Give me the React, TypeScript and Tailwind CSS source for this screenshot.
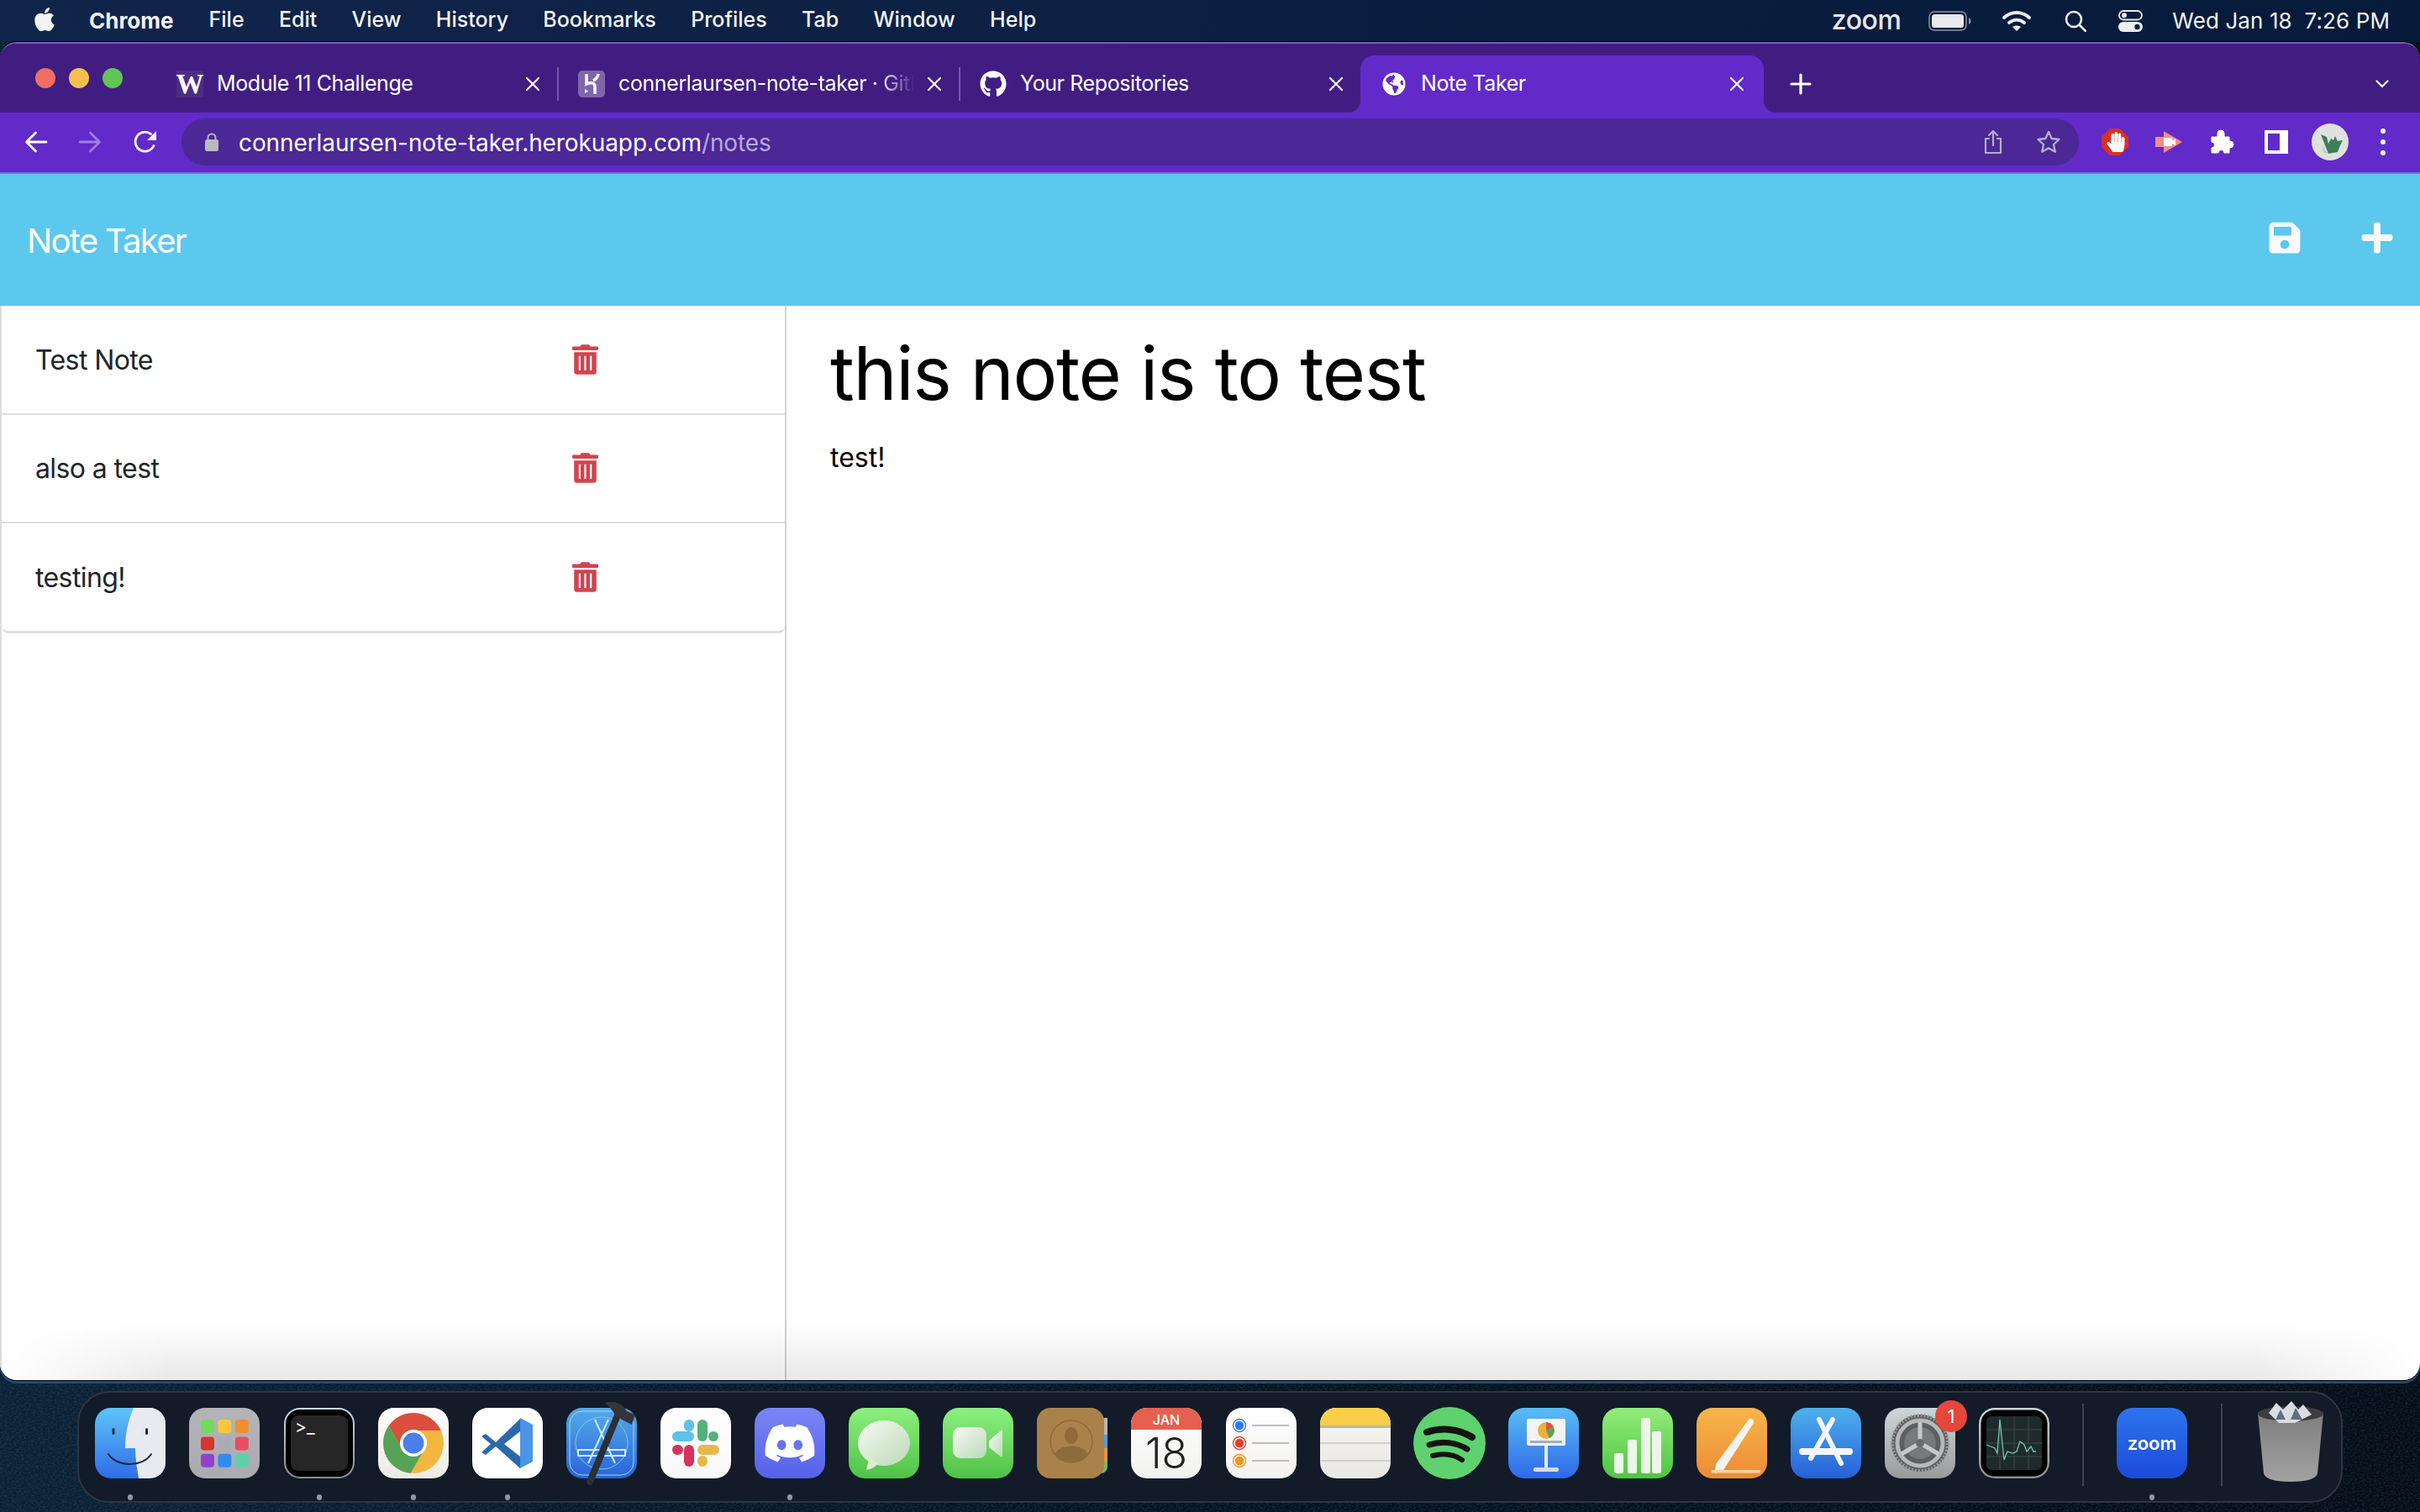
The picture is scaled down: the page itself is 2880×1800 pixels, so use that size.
import type { ReactNode } from "react";
import { FaApple, FaDiscord, FaGithub, FaGlobeAmericas, FaHandPaper, FaPlus, FaSave, FaTrashAlt } from "react-icons/fa";

const MENU = ["File", "Edit", "View", "History", "Bookmarks", "Profiles", "Tab", "Window", "Help"];
const NOTES = ["Test Note", "also a test", "testing!"];

function CloseX() {
  return (
    <svg viewBox="0 0 16 16" className="h-[16px] w-[16px] shrink-0 stroke-white" fill="none" strokeWidth="2.2" strokeLinecap="round">
      <path d="M1 1l14 14M15 1L1 15" />
    </svg>
  );
}

function Tab({ icon, title, fade }: { icon: ReactNode; title: string; fade?: boolean }) {
  return (
    <div className="flex h-[68px] w-[476px] shrink-0 items-center pl-[23px] pr-[21px]">
      <div className="flex h-[32px] w-[32px] shrink-0 items-center justify-center">{icon}</div>
      <div
        className={
          fade
            ? "ml-[16px] w-[352px] overflow-hidden whitespace-nowrap text-[25px] tracking-[-0.4px] text-white [mask-image:linear-gradient(to_right,black_88%,transparent)]"
            : "ml-[16px] w-[352px] overflow-hidden whitespace-nowrap text-[25px] tracking-[-0.4px] text-white"
        }
      >
        {title}
      </div>
      <div className="flex-1" />
      <CloseX />
    </div>
  );
}

function TabSep() {
  return <div className="mb-[14px] h-[40px] w-[2px] shrink-0 self-end bg-[#7559a8]" />;
}

function MenuBar() {
  return (
    <header className="flex h-[50px] shrink-0 items-center bg-gradient-to-r from-[#10254a] to-[#061a3a] pl-[38px] pr-[36px] text-[25px] text-[#f2f3f5]">
      <FaApple className="mb-[5px] h-[32px] w-[30px]" />
      <span className="mb-[2px] ml-[38px] text-[26px] font-bold">Chrome</span>
      <nav className="mb-[2px] ml-[42px] flex gap-[41.300px] font-medium">
        {MENU.map((m) => (
          <span key={m}>{m}</span>
        ))}
      </nav>
      <div className="flex-1" />
      <span className="mb-[3px] text-[32px] font-medium leading-none tracking-[-0.5px] text-[#e6e8ec]">zoom</span>
      <svg viewBox="0 0 52 24" className="ml-[33px] h-[24px] w-[52px]">
        <rect x="1" y="1" width="44" height="22" rx="6" fill="none" stroke="#8c95a5" strokeWidth="1.5" />
        <rect x="4" y="4" width="38" height="16" rx="3.5" fill="#e8eaee" />
        <path d="M48 8c2 1 2.5 2.5 2.5 4s-.5 3-2.5 4z" fill="#8c95a5" />
      </svg>
      <svg viewBox="0 0 34 26" className="ml-[36px] h-[26px] w-[34px]" fill="none" stroke="#eceef2" strokeWidth="4" strokeLinecap="round">
        <path d="M2 9c9-8 21-8 30 0" />
        <path d="M8 15c5.500-4.500 12.500-4.500 18 0" />
        <path d="M17 25l-5-5c3-2 7-2 10 0z" fill="#eceef2" stroke="none" />
      </svg>
      <svg viewBox="0 0 26 26" className="ml-[40px] h-[26px] w-[26px]" fill="none" stroke="#eceef2" strokeWidth="2.6" strokeLinecap="round">
        <circle cx="11" cy="11" r="9" />
        <path d="M18 18l7 7" />
      </svg>
      <svg viewBox="0 0 29 26" className="ml-[38px] h-[26px] w-[29px]">
        <rect x="1" y="1" width="27" height="10.500" rx="5.200" fill="none" stroke="#eceef2" strokeWidth="1.800" />
        <circle cx="7" cy="6.200" r="3" fill="#eceef2" />
        <rect x="0" y="14" width="29" height="12" rx="6" fill="#eceef2" />
        <circle cx="22.500" cy="20" r="3.200" fill="#0a1c3c" />
      </svg>
      <span className="mb-[2px] ml-[35px] whitespace-nowrap text-[26px] tracking-[0.1px]">Wed Jan 18&nbsp;&nbsp;7:26 PM</span>
    </header>
  );
}

function TabStrip() {
  return (
    <div className="flex h-[82px] shrink-0 items-end bg-[#411d82]">
      <div className="mb-[29px] flex w-[187px] shrink-0 gap-[16px] pl-[42px]">
        <span className="h-[24px] w-[24px] rounded-full bg-[#ee6f61]" />
        <span className="h-[24px] w-[24px] rounded-full bg-[#f5bf4f]" />
        <span className="h-[24px] w-[24px] rounded-full bg-[#61c554]" />
      </div>
      <Tab
        title="Module 11 Challenge"
        icon={
          <span className="flex h-[32px] w-[32px] items-center justify-center bg-[#4b2e83] font-[family-name:'Liberation_Serif',serif] text-[33px] font-bold leading-none text-white">
            W
          </span>
        }
      />
      <TabSep />
      <Tab
        fade
        title="connerlaursen-note-taker · GitHub"
        icon={
          <svg viewBox="0 0 32 32" className="h-[32px] w-[32px]">
            <rect width="32" height="32" rx="5" fill="#7f65ad" />
            <path d="M10 4v12c4-2 10-2 10 3v9M24 4c-.5 4-2.500 6-6 8" fill="none" stroke="#fff" strokeWidth="3.500" />
            <path d="M8 22v5l4-2.500z" fill="#fff" />
          </svg>
        }
      />
      <TabSep />
      <Tab title="Your Repositories" icon={<FaGithub className="h-[32px] w-[32px] text-white" />} />
      <div className="relative flex h-[68px] w-[480px] shrink-0 items-center rounded-t-[16px] bg-[#622ac9] pl-[26px] pr-[24px]">
        <span className="absolute bottom-0 left-[-14px] h-[14px] w-[14px] bg-[radial-gradient(circle_at_0_0,transparent_13.500px,#622ac9_14.500px)]" />
        <span className="absolute bottom-0 right-[-14px] h-[14px] w-[14px] bg-[radial-gradient(circle_at_100%_0,transparent_13.500px,#622ac9_14.500px)]" />
        <FaGlobeAmericas className="h-[28px] w-[28px] text-white" />
        <span className="ml-[18px] flex-1 text-[25px] tracking-[-0.4px] text-white">Note Taker</span>
        <CloseX />
      </div>
      <div className="mb-[21px] ml-[31px] flex h-[26px] w-[26px] items-center justify-center">
        <svg viewBox="0 0 26 26" className="h-[26px] w-[26px]" stroke="#fff" strokeWidth="3.200" strokeLinecap="round">
          <path d="M13 2v22M2 13h22" />
        </svg>
      </div>
      <div className="flex-1" />
      <svg viewBox="0 0 16 10" className="mb-[29px] mr-[37px] h-[10px] w-[16px]" fill="none" stroke="#fff" strokeWidth="2.200" strokeLinecap="round">
        <path d="M1.500 1.500L8 8l6.500-6.500" />
      </svg>
    </div>
  );
}

function Toolbar() {
  return (
    <div className="flex h-[73px] shrink-0 items-center border-b-2 border-[#8b62da] bg-[#622ac9] pb-[2px] pl-[29px] pr-[41px]">
      <svg viewBox="0 0 28 26" className="h-[26px] w-[28px]" fill="none" stroke="#fff" strokeWidth="2.800" strokeLinecap="round" strokeLinejoin="round">
        <path d="M26 13H3M13.500 2L2.500 13l11 11" />
      </svg>
      <svg viewBox="0 0 28 26" className="ml-[36px] h-[26px] w-[28px]" fill="none" stroke="#a27fe6" strokeWidth="2.800" strokeLinecap="round" strokeLinejoin="round">
        <path d="M2 13h23M14.500 2l11 11-11 11" />
      </svg>
      <svg viewBox="0 0 28 28" className="ml-[38px] h-[28px] w-[28px]" fill="none">
        <path d="M24 18.500A11.500 11.500 0 1 1 20.500 4.500" stroke="#fff" strokeWidth="2.800" strokeLinecap="round" />
        <path d="M27 1v11H16z" fill="#fff" />
      </svg>
      <div className="ml-[29px] flex h-[56px] flex-1 items-center rounded-full bg-[#4b2896] pl-[28px] pr-[21px]">
        <svg viewBox="0 0 16 22" className="h-[22px] w-[16px]">
          <path d="M3.500 9V6a4.500 4.500 0 0 1 9 0v3" fill="none" stroke="#b9bac1" strokeWidth="2" />
          <rect y="8" width="16" height="14" rx="2.500" fill="#b9bac1" />
        </svg>
        <span className="ml-[24px] mt-[3px] whitespace-nowrap text-[28px] tracking-[-0.1px] text-white">
          connerlaursen-note-taker.herokuapp.com<span className="text-[#b9a8dc]">/notes</span>
        </span>
        <div className="flex-1" />
        <svg viewBox="0 0 22 30" className="h-[30px] w-[22px]" fill="none" stroke="#b5b0c4" strokeWidth="2.200" strokeLinecap="round" strokeLinejoin="round">
          <path d="M6 11H2v17h18V11h-4M11 19V2M6 7l5-5 5 5" />
        </svg>
        <svg viewBox="0 0 30 30" className="ml-[40px] h-[30px] w-[30px]" fill="none" stroke="#b5b0c4" strokeWidth="2.300" strokeLinejoin="round">
          <path d="M15 3l3.700 8 8.800 1-6.500 6 1.800 8.700-7.800-4.400-7.800 4.400L9 18l-6.500-6 8.800-1z" />
        </svg>
      </div>
      <svg viewBox="0 0 32 32" className="ml-[27px] h-[32px] w-[32px]">
        <path d="M10 0h12l10 10v12L22 32H10L0 22V10z" fill="#d63125" />
        <FaHandPaper x="5" y="4" size={24} color="#fff" />
      </svg>
      <svg viewBox="0 0 32 26" className="ml-[32px] h-[26px] w-[32px]">
        <path d="M10 0l22 13-22 13z" fill="#f58c85" />
        <rect y="7" width="20" height="12" fill="#f58c85" />
        <rect x="10" y="8" width="10" height="10" fill="#fff" />
        <path d="M20 11l4-2v8l-4-2z" fill="#fff" />
      </svg>
      <svg viewBox="0 0 29 29" className="ml-[34px] h-[29px] w-[29px]">
        <path d="M1 9h7V5a4 4 0 0 1 8 0v4h6v5h1a4 4 0 0 1 0 8h-1v6h-6a3.500 3.500 0 0 0-7 0H1v-6a3.500 3.500 0 0 0 0-7z" fill="#fff" stroke="#fff" strokeLinejoin="round" />
      </svg>
      <svg viewBox="0 0 28 28" className="ml-[35px] h-[28px] w-[28px]">
        <path d="M0 0h28v28H0z M4 4v20h14V4z" fill="#fff" fillRule="evenodd" />
      </svg>
      <svg viewBox="0 0 44 44" className="ml-[28px] h-[44px] w-[44px]">
        <circle cx="22" cy="22" r="22" fill="#dfe1de" />
        <path d="M11 13l7 3 2 8 3-6 3 2 2-5 3 6 6-1-3 6-3 8-11 2-4-10z" fill="#3d7e5b" />
        <path d="M12 25l4 8 4 2-5 0z" fill="#b4b8b5" />
      </svg>
      <div className="ml-[38px] flex flex-col gap-[7px]">
        <span className="h-[6px] w-[6px] rounded-full bg-white" />
        <span className="h-[6px] w-[6px] rounded-full bg-white" />
        <span className="h-[6px] w-[6px] rounded-full bg-white" />
      </div>
    </div>
  );
}

function NoteApp() {
  return (
    <div className="relative flex min-h-0 flex-1 flex-col bg-white">
      <div className="flex h-[157px] shrink-0 items-center justify-between bg-[#5cc8ee] pl-[32px] pr-[30px]">
        <span className="mt-[3px] text-[40px] tracking-[-1.700px] text-white">Note Taker</span>
        <div className="mb-[6px] flex items-center gap-[68px] text-[#f8f9fa]">
          <FaSave className="h-[42px] w-[42px]" />
          <FaPlus className="h-[42px] w-[42px]" />
        </div>
      </div>
      <div className="flex min-h-0 flex-1">
        <aside className="w-[936px] shrink-0 border-l-2 border-r-2 border-l-[#dcdcdc] border-r-[#d2d2d2]">
          <ul className="rounded-b-[8px] border-b-[3px] border-[#dfdfdf]">
            {NOTES.map((n, i) => (
              <li key={n} className={i < 2 ? "flex h-[129.500px] items-center border-b-2 border-[#dfdfdf] pl-[40px]" : "flex h-[128px] items-center pl-[40px]"}>
                <span className="mt-[2px] w-[639px] text-[32px] tracking-[-0.6px] text-[#212529]">{n}</span>
                <FaTrashAlt className="h-[36px] w-[31px] text-[#d0444f]" />
              </li>
            ))}
          </ul>
        </aside>
        <main className="flex-1 pl-[52px] pt-[28px] text-black">
          <h1 className="text-[88px] leading-[1.2] tracking-[-1.300px]">this note is to test</h1>
          <p className="mt-[23px] text-[32px] leading-[1.5]">test!</p>
        </main>
      </div>
      <div className="pointer-events-none absolute inset-x-0 bottom-0 h-[70px] bg-gradient-to-b from-transparent to-black/[0.09] [mask-image:linear-gradient(to_right,transparent,black_200px,black_calc(100%-200px),transparent)]" />
    </div>
  );
}

function Tile({ id, from, to, children }: { id: string; from: string; to: string; children?: ReactNode }) {
  return (
    <svg viewBox="0 0 84 84" className="h-[84px] w-[84px] overflow-visible">
      <defs>
        <linearGradient id={id} x1="0" y1="0" x2="0" y2="1">
          <stop offset="0" stopColor={from} />
          <stop offset="1" stopColor={to} />
        </linearGradient>
        <linearGradient id={`${id}-glass`} x1="0" y1="0" x2="1" y2="1">
          <stop offset="0" stopColor="#f6faf4" />
          <stop offset="1" stopColor="#bcd9b6" />
        </linearGradient>
      </defs>
      <rect width="84" height="84" rx="19" fill={`url(#${id})`} />
      {children}
    </svg>
  );
}

const LAUNCH = [
  ["#6fdc5a", "#f9c63c", "#ef8f2e"],
  ["#d9352a", "#a9acb0", "#ea4d62"],
  ["#9440cf", "#2f8cf5", "#5bd1a8"],
];

const DOCK: { key: string; dot?: boolean; node: ReactNode }[] = [
  {
    key: "finder",
    dot: true,
    node: (
      <Tile id="fi" from="#5ec4fa" to="#2f6ce6">
        <path d="M46 0h19a19 19 0 0 1 19 19v46a19 19 0 0 1-19 19H52c-2-12-4-24-4-36H36c0-16 3-32 10-48z" fill="#e8eaf0" />
        <rect x="20.500" y="24" width="3" height="8" rx="1.500" fill="#1f2a3a" />
        <rect x="60" y="24" width="3" height="8" rx="1.500" fill="#1f2a3a" />
        <path d="M16 55c10 16 41 16 51 0" fill="none" stroke="#1f2a3a" strokeWidth="2" strokeLinecap="round" />
      </Tile>
    ),
  },
  {
    key: "launchpad",
    node: (
      <Tile id="la" from="#b2b4b8" to="#a9abb0">
        {LAUNCH.map((row, y) => row.map((c, x) => <rect key={c} x={14 + x * 20.400} y={14 + y * 20.400} width="16" height="16" rx="4" fill={c} />))}
      </Tile>
    ),
  },
  {
    key: "terminal",
    dot: true,
    node: (
      <svg viewBox="0 0 84 84" className="h-[84px] w-[84px]">
        <defs>
          <linearGradient id="te" x1="0" y1="0" x2="0" y2="1">
            <stop offset="0" stopColor="#c4dfe6" />
            <stop offset="1" stopColor="#8a8a8a" />
          </linearGradient>
        </defs>
        <rect width="84" height="84" rx="19" fill="url(#te)" />
        <rect x="2" y="2" width="80" height="80" rx="17" fill="#000" />
        <rect x="8" y="9" width="68" height="66" rx="9" fill="#262626" />
        <text x="13" y="30" fill="#fff" fontSize="21" fontFamily="Inter, sans-serif">&gt;_</text>
      </svg>
    ),
  },
  {
    key: "chrome",
    dot: true,
    node: (
      <Tile id="ch" from="#ffffff" to="#eceae4">
        <circle cx="42" cy="42" r="36" fill="#f1b73f" />
        <path d="M74.700 27A36 36 0 0 0 12.700 21.200L29 49.500 42 42V27z" fill="#db4f3e" />
        <path d="M12.700 21.200A36 36 0 0 0 38.600 77.800L55 49.500 42 42 29 49.500z" fill="#56a257" />
        <circle cx="42" cy="42" r="16" fill="#fff" />
        <circle cx="42" cy="42" r="12.500" fill="#4a7ee8" />
      </Tile>
    ),
  },
  {
    key: "vscode",
    dot: true,
    node: (
      <Tile id="vs" from="#ffffff" to="#ffffff">
        <path d="M57 13L28 41 16 31l-5 3 11 9-11 10 5 3 12-10 29 26V58L38 43l19-15z" fill="#2b68ad" />
        <path d="M57 12l15 8v44l-15 8z" fill="#4b95e6" />
      </Tile>
    ),
  },
  {
    key: "xcode",
    node: (
      <Tile id="xc" from="#53ace9" to="#2864d8">
        <rect x="4" y="4" width="76" height="76" rx="15" fill="none" stroke="#a9d4f5" strokeWidth="1" />
        <circle cx="42" cy="42" r="31" fill="none" stroke="#8cc2f0" strokeWidth="1" />
        <path d="M34 14l24 52M50 14L26 66M14 50h56v7H14z" fill="none" stroke="#d6ebfb" strokeWidth="2" />
        <path d="M28 88L63 4" stroke="#2c2f35" strokeWidth="8" strokeLinecap="round" />
        <path d="M46-6C58-10 68-4 72 4l10 4-4 12-12-6-8-6C54 2 50-2 46-6z" fill="#33363c" />
      </Tile>
    ),
  },
  {
    key: "slack",
    node: (
      <Tile id="sl" from="#ffffff" to="#f8f8f8">
        <rect x="14" y="28" width="26" height="12" rx="6" fill="#5dc1e8" />
        <rect x="28" y="14" width="12" height="14" rx="6" fill="#5dc1e8" />
        <rect x="44" y="14" width="12" height="26" rx="6" fill="#52b17d" />
        <rect x="57" y="28" width="12" height="12" rx="6" fill="#52b17d" />
        <rect x="44" y="44" width="26" height="12" rx="6" fill="#e6b84b" />
        <rect x="44" y="57" width="12" height="13" rx="6" fill="#e6b84b" />
        <rect x="28" y="44" width="12" height="26" rx="6" fill="#d5345c" />
        <rect x="14" y="44" width="13" height="12" rx="6" fill="#d5345c" />
      </Tile>
    ),
  },
  {
    key: "discord",
    dot: true,
    node: (
      <Tile id="di" from="#7a85f5" to="#5562e8">
        <FaDiscord x="10" y="10" size={64} color="#fff" />
      </Tile>
    ),
  },
  {
    key: "messages",
    node: (
      <Tile id="me" from="#8cf07f" to="#50c247">
        <ellipse cx="42" cy="42" rx="31" ry="27" fill="url(#me-glass)" />
        <path d="M24 60l-3 14c6-1 11-4 14-8z" fill="#dcecd6" />
      </Tile>
    ),
  },
  {
    key: "facetime",
    node: (
      <Tile id="fa" from="#8cf07f" to="#50c247">
        <rect x="12" y="23" width="40" height="37" rx="9" fill="url(#fa-glass)" />
        <path d="M55 39l14-12c1-1 2 0 2 1v29c0 1-1 2-2 1L55 47z" fill="url(#fa-glass)" />
      </Tile>
    ),
  },
  {
    key: "contacts",
    node: (
      <svg viewBox="0 0 84 84" className="h-[84px] w-[84px]">
        <path d="M70 12h14v58a8 8 0 0 1-8 8h-6z" fill="#6fbf5a" />
        <rect x="76" y="12" width="8" height="20" fill="#b5b5b5" />
        <rect x="76" y="32" width="8" height="16" fill="#4e9fd8" />
        <rect x="76" y="48" width="8" height="16" fill="#ee9530" />
        <rect width="80" height="84" rx="16" fill="#a9824b" />
        <circle cx="41" cy="40" r="25" fill="none" stroke="#8d6b3b" strokeWidth="1.500" />
        <ellipse cx="41" cy="33" rx="8" ry="10" fill="#8d6b3b" />
        <path d="M21 56c4-14 36-14 40 0-10 11-30 11-40 0z" fill="#8d6b3b" />
      </svg>
    ),
  },
  {
    key: "calendar",
    node: (
      <Tile id="ca" from="#ffffff" to="#f1f1ef">
        <path d="M19 0h46a19 19 0 0 1 19 19v7H0v-7A19 19 0 0 1 19 0z" fill="#e5604f" />
        <text x="42" y="20" textAnchor="middle" fill="#fff" fontSize="16" fontWeight="500" fontFamily="Inter, sans-serif">JAN</text>
        <text x="42" y="72" textAnchor="middle" fill="#222" fontSize="50" fontWeight="300" fontFamily="Inter, sans-serif">18</text>
      </Tile>
    ),
  },
  {
    key: "reminders",
    node: (
      <Tile id="re" from="#ffffff" to="#f3f2f0">
        {[{ y: 21, c: "#2f7df0" }, { y: 42, c: "#e63c30" }, { y: 63, c: "#ef9320" }].map((r) => (
          <g key={r.y}>
            <circle cx="16" cy={r.y} r="7.500" fill="none" stroke={r.c} strokeWidth="1.300" />
            <circle cx="16" cy={r.y} r="5.200" fill={r.c} />
            <path d={`M31 ${r.y}h44`} stroke="#bdbdbd" strokeWidth="2" />
          </g>
        ))}
      </Tile>
    ),
  },
  {
    key: "notes",
    node: (
      <Tile id="no" from="#f6f5f2" to="#e9e8e4">
        <path d="M19 0h46a19 19 0 0 1 19 19v2H0v-2A19 19 0 0 1 19 0z" fill="#f9cf47" />
        <rect y="21" width="84" height="3" fill="#b9b7ad" />
        <path d="M0 42h84M0 63h84" stroke="#d0cfca" strokeWidth="2" />
      </Tile>
    ),
  },
  {
    key: "spotify",
    node: (
      <svg viewBox="0 0 86 86" className="-m-[1px] h-[86px] w-[86px]" fill="none" stroke="#141414" strokeLinecap="round">
        <circle cx="43" cy="43" r="43" fill="#5ed26f" stroke="none" />
        <path d="M16 30c18-6 38-4 54 6" strokeWidth="8" />
        <path d="M19 45c15-5 32-3 45 5" strokeWidth="7" />
        <path d="M23 58c12-3 25-2 35 5" strokeWidth="6" />
      </svg>
    ),
  },
  {
    key: "keynote",
    node: (
      <Tile id="ke" from="#58bdf6" to="#2f68e8">
        <rect x="22" y="13" width="46" height="32" rx="2" fill="#f4f4f4" />
        <circle cx="45" cy="27" r="10" fill="#e8b23c" />
        <path d="M45 27V17a10 10 0 0 1 9 6z" fill="#d9553f" />
        <path d="M45 27l9-4a10 10 0 0 1-5 13z" fill="#5aa25c" />
        <rect x="26" y="39" width="38" height="3" fill="#9db0c8" />
        <rect x="43" y="45" width="4" height="26" fill="#e9ebee" />
        <rect x="30" y="71" width="30" height="5" rx="2" fill="#d7dade" />
      </Tile>
    ),
  },
  {
    key: "numbers",
    node: (
      <Tile id="nu" from="#93ec7a" to="#4ec543">
        <rect x="14" y="54" width="11" height="24" rx="2" fill="#eef5ea" />
        <rect x="30" y="38" width="11" height="40" rx="2" fill="#eef5ea" />
        <rect x="46" y="12" width="11" height="66" rx="2" fill="#eef5ea" />
        <rect x="59" y="28" width="11" height="50" rx="2" fill="#eef5ea" />
      </Tile>
    ),
  },
  {
    key: "pages",
    node: (
      <Tile id="pa" from="#f7b64a" to="#ec8c36">
        <path d="M62 14c3-3 7 0 6 4L32 74l-10 4 1-11z" fill="#f5f3ee" />
        <rect x="18" y="74" width="58" height="3.500" fill="#f8d3a0" />
      </Tile>
    ),
  },
  {
    key: "appstore",
    node: (
      <Tile id="ap" from="#4db1ee" to="#2660d8">
        <path d="M50 14L24 60M34 14l26 52" stroke="#f3f7fb" strokeWidth="6" strokeLinecap="round" />
        <path d="M14 52h56" stroke="#f3f7fb" strokeWidth="8" strokeLinecap="round" />
      </Tile>
    ),
  },
  {
    key: "prefs",
    node: (
      <Tile id="sy" from="#cdd6da" to="#9a9a9a">
        <circle cx="42" cy="42" r="34" fill="#5d5f61" />
        <circle cx="42" cy="42" r="33" fill="none" stroke="#9a9c9e" strokeWidth="4" strokeDasharray="2 2" />
        <circle cx="42" cy="42" r="27" fill="none" stroke="#b6b8ba" strokeWidth="5" />
        <circle cx="42" cy="42" r="19" fill="#77797b" />
        <path d="M42 42V17M42 42L20 55M42 42l22 13" stroke="#c6c8ca" strokeWidth="5" />
        <circle cx="42" cy="42" r="5" fill="#6a6c6e" />
        <circle cx="79" cy="10" r="19" fill="#e5473a" />
        <text x="79" y="18" textAnchor="middle" fill="#fff" fontSize="22" fontFamily="Inter, sans-serif">1</text>
      </Tile>
    ),
  },
  {
    key: "activity",
    node: (
      <svg viewBox="0 0 84 84" className="h-[84px] w-[84px]">
        <defs>
          <linearGradient id="ac" x1="0" y1="0" x2="0" y2="1">
            <stop offset="0" stopColor="#cfd6d8" />
            <stop offset="1" stopColor="#8d8d8d" />
          </linearGradient>
        </defs>
        <rect width="84" height="84" rx="19" fill="url(#ac)" />
        <rect x="2.500" y="2.500" width="79" height="79" rx="16" fill="#000" />
        <rect x="9" y="10" width="66" height="64" rx="6" fill="#1f2b2b" />
        <path d="M9 26h66M9 42h66M9 58h66M25 10v64M42 10v64M59 10v64" stroke="#3b4d4b" strokeWidth="1" />
        <path d="M9 44l10 4 3 6 3-40 5 48 4-10 6 2 5-2 4-12 5 4 3 8 5-6 3 6 3 0" fill="none" stroke="#74c9ad" strokeWidth="1.300" />
      </svg>
    ),
  },
  {
    key: "sep1",
    node: <div className="mx-[11px] mt-[-5px] h-[98px] w-[2px] bg-[#3c444e]" />,
  },
  {
    key: "zoom",
    dot: true,
    node: (
      <Tile id="zo" from="#2d74ee" to="#1c4bd8">
        <text x="42" y="50" textAnchor="middle" fill="#fff" fontSize="22" fontWeight="600" fontFamily="Inter, sans-serif">zoom</text>
      </Tile>
    ),
  },
  {
    key: "sep2",
    node: <div className="mx-[11px] mt-[-5px] h-[98px] w-[2px] bg-[#3c444e]" />,
  },
  {
    key: "trash",
    node: (
      <svg viewBox="0 0 84 96" className="mt-[-8px] h-[96px] w-[84px]">
        <defs>
          <linearGradient id="tr" x1="0" y1="0" x2="0" y2="1">
            <stop offset="0" stopColor="#7e7e7e" />
            <stop offset="1" stopColor="#a2a2a2" />
          </linearGradient>
        </defs>
        <path d="M3 14h78l-7 72c-1 6-12 10-32 10S11 92 10 86z" fill="url(#tr)" />
        <ellipse cx="42" cy="15" rx="39" ry="9" fill="#3d3d3f" />
        <path d="M16 14l9-12 8 8 10-10 8 10 6-6 10 12-20 10H28z" fill="#d9dde0" />
        <path d="M30 10l6 12h-12zM48 8l8 14H42z" fill="#5f6e86" />
      </svg>
    ),
  },
];

function Dock() {
  return (
    <div className="mt-[13px] flex justify-center">
      <div className="flex h-[133px] items-start gap-[28.100px] rounded-[38px] border-2 border-[#2f363f] bg-[#121b27] pl-[19px] pr-[18px] pt-[18px]">
        {DOCK.map((d) => (
          <div key={d.key} className="flex shrink-0 flex-col items-center">
            {d.node}
            {d.dot && <span className="mt-[19px] h-[7px] w-[6px] rounded-full bg-[#8e97a3]" />}
          </div>
        ))}
      </div>
    </div>
  );
}

export default function App() {
  return (
    <div className="relative flex h-[1800px] w-[2880px] flex-col overflow-hidden bg-gradient-to-r from-[#0a2135] via-[#041220] to-[#030c16] font-[family-name:Inter,sans-serif]">
      <svg className="absolute inset-0 h-full w-full opacity-[0.22]">
        <filter id="grain">
          <feTurbulence type="fractalNoise" baseFrequency="0.35 0.6" numOctaves="3" />
          <feColorMatrix values="0 0 0 0 0.25 0 0 0 0 0.42 0 0 0 0 0.6 0 0 0 1.4 -0.5" />
        </filter>
        <rect width="100%" height="100%" filter="url(#grain)" />
      </svg>
      <div className="relative flex flex-1 flex-col">
        <MenuBar />
        <div className="flex h-[1593px] shrink-0 flex-col overflow-hidden rounded-[20px] border-t-2 border-[#7d5eac] shadow-[0_-1px_0_#000,0_1px_0_#000,0_4px_0_#2b4a70]">
          <TabStrip />
          <Toolbar />
          <NoteApp />
        </div>
        <Dock />
      </div>
    </div>
  );
}
